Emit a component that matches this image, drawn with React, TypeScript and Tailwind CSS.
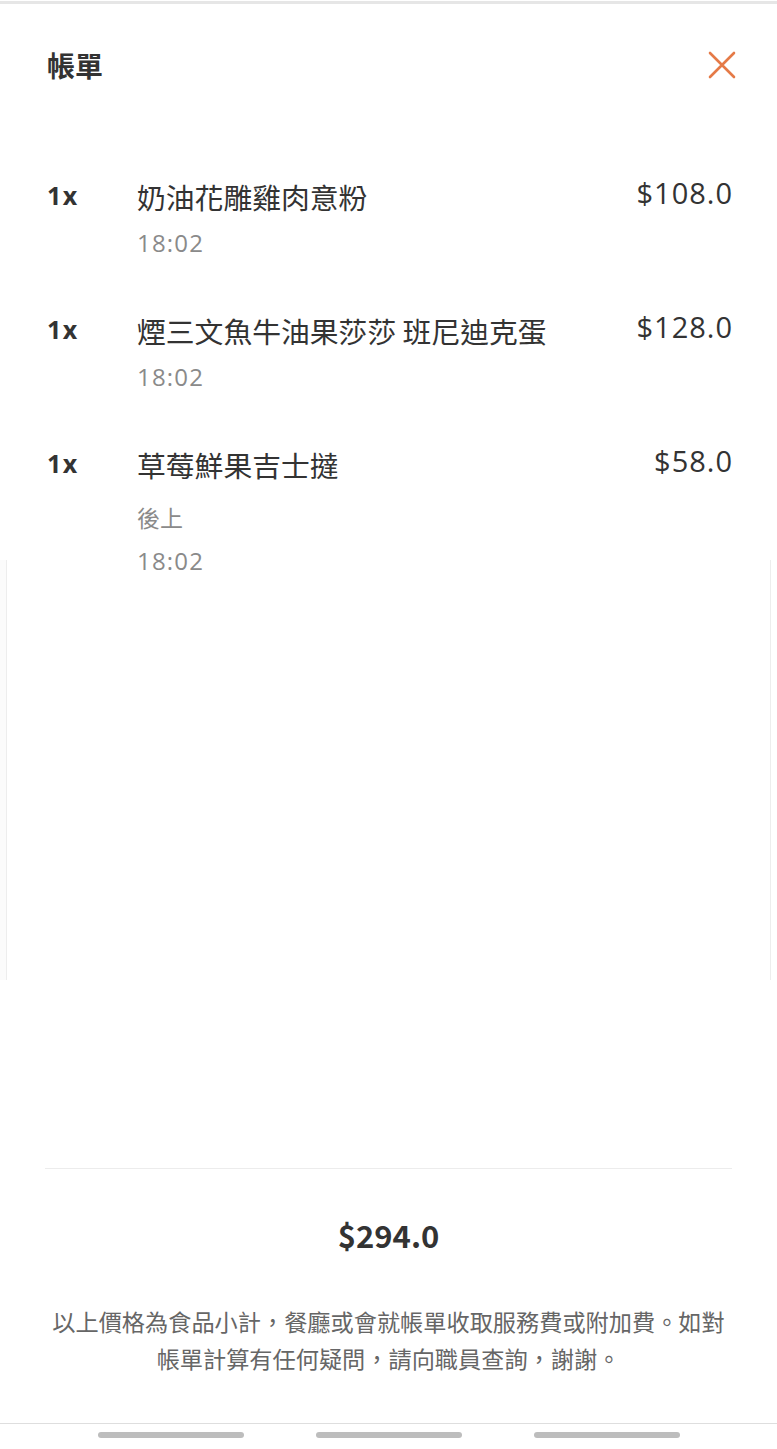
import React from "react";

const latin = { fontFamily: '"Open Sans", "Noto Sans CJK TC", sans-serif' };
const cjk = { fontFamily: '"Noto Sans CJK TC", "Noto Sans", sans-serif' };

type Item = { name: string; price: string; note?: string; time: string };

const items: Item[] = [
  { name: "奶油花雕雞肉意粉", price: "$108.0", time: "18:02" },
  { name: "煙三文魚牛油果莎莎 班尼迪克蛋", price: "$128.0", time: "18:02" },
  { name: "草莓鮮果吉士撻", price: "$58.0", note: "後上", time: "18:02" },
];

function Row({ item }: { item: Item }) {
  return (
    <div className="flex items-start">
      <div
        className="w-[90px] shrink-0 text-[25px] font-bold leading-[44px] tracking-[1.5px] text-[#333333]"
        style={latin}
      >
        1x
      </div>
      <div className="flex-1 flex flex-col">
        <div className="text-[28.8px] leading-[48px] text-[#333333]" style={cjk}>
          {item.name}
        </div>
        {item.note && (
          <div className="mt-[6px] text-[23px] leading-[44px] text-[#8a8a8a]" style={cjk}>
            {item.note}
          </div>
        )}
        <div className="text-[24px] leading-[44px] tracking-[1.2px] text-[#8a8a8a]" style={latin}>
          {item.time}
        </div>
      </div>
      <div
        className="shrink-0 text-[29px] leading-[40px] tracking-[1px] text-[#333333]"
        style={latin}
      >
        {item.price}
      </div>
    </div>
  );
}

export default function App() {
  return (
    <div className="relative flex h-[1449px] w-[777px] flex-col overflow-hidden bg-white">
      <div className="mt-[1px] h-[3px] w-full bg-[#e6e6e6]" />

      <div className="flex h-[122px] items-center justify-between pl-[47px] pr-[41px]">
        <div className="text-[28px] font-bold text-[#333333]" style={cjk}>
          帳單
        </div>
        <svg width="28" height="28" viewBox="0 0 28 28" fill="none">
          <path
            d="M2 2 L26 26 M26 2 L2 26"
            stroke="#e57a47"
            strokeWidth="2.6"
            strokeLinecap="round"
          />
        </svg>
      </div>

      <div className="flex flex-col gap-[42px] pl-[47px] pr-[44px] pt-[47px]">
        {items.map((it, i) => (
          <Row key={i} item={it} />
        ))}
      </div>

      <div className="flex-1" />

      <div className="mx-[45px] h-px bg-[#ececec]" />
      <div
        className="mt-[46px] text-center text-[31px] font-bold leading-[40px] text-[#333333]"
        style={cjk}
      >
        $294.0
      </div>
      <div
        className="mt-[48px] text-center text-[23.2px] leading-[37px] text-[#666666]"
        style={cjk}
      >
        以上價格為食品小計，餐廳或會就帳單收取服務費或附加費。如對
        <br />
        帳單計算有任何疑問，請向職員查詢，謝謝。
      </div>
      <div className="mt-[46px] h-px w-full bg-[#dedede]" />
      <div className="flex h-[25px] justify-center gap-[72px] pt-[8px]">
        <div className="h-[6px] w-[146px] rounded-full bg-[#bdbdbd]" />
        <div className="h-[6px] w-[146px] rounded-full bg-[#bdbdbd]" />
        <div className="h-[6px] w-[146px] rounded-full bg-[#bdbdbd]" />
      </div>

      <div className="absolute left-0 top-[560px] h-[420px] w-[7px] border-r border-[#ededed] bg-[#fbfbfb]" />
      <div className="absolute left-[770px] top-[560px] h-[420px] w-[7px] border-l border-[#ededed] bg-white" />
    </div>
  );
}
